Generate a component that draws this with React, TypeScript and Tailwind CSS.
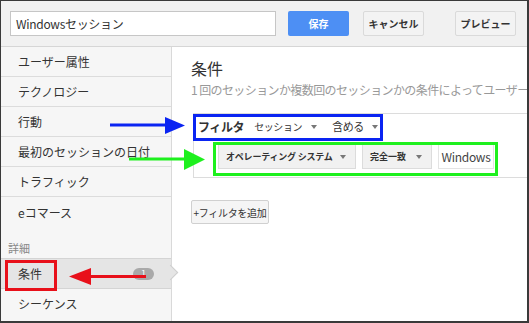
const font = { fontFamily: '"Noto Sans CJK JP", "Liberation Sans", sans-serif' };

function Caret({ className = "" }: { className?: string }) {
  return (
    <span
      className={`inline-block w-0 h-0 border-x-[3px] border-x-transparent border-t-[4px] border-t-[#777] ${className}`}
    ></span>
  );
}

const sideItems = ["ユーザー属性", "テクノロジー", "行動", "最初のセッションの日付", "トラフィック"];

export default function App() {
  return (
    <div
      className="relative w-[529px] h-[323px] overflow-hidden border-l border-t border-r-2 border-b-2 border-[#3a3a3a] bg-white flex flex-col text-[#333]"
      style={font}
    >
      {/* top bar */}
      <div className="h-[46px] shrink-0 bg-[#f1f1f1] border-b border-[#d6d6d6] flex items-center">
        <div className="ml-[9px] w-[266px] h-[25px] bg-white border border-[#c6c6c6] flex items-center px-[5px] text-[12px] tracking-[-0.3px]">
          Windowsセッション
        </div>
        <button className="ml-[12px] w-[61px] h-[25px] rounded-[2px] bg-[#4d8ff4] text-white text-[10px] font-bold">
          保存
        </button>
        <button className="ml-[14px] w-[61px] h-[25px] rounded-[2px] bg-[#f3f3f3] border border-[#dadada] text-[10px] font-bold text-[#333]">
          キャンセル
        </button>
        <button className="ml-[31px] w-[61px] h-[25px] rounded-[2px] bg-[#f3f3f3] border border-[#dadada] text-[10px] font-bold text-[#333]">
          プレビュー
        </button>
      </div>

      <div className="flex flex-1 min-h-0">
        {/* sidebar */}
        <div className="w-[171px] shrink-0 bg-[#f6f6f6] border-r border-[#d9d9d9] flex flex-col text-[12px]">
          {sideItems.map((t) => (
            <div key={t} className="h-[30px] shrink-0 border-b border-[#dcdcdc] flex items-center pl-[17px]">
              {t}
            </div>
          ))}
          <div className="h-[31px] shrink-0 flex items-center pl-[17px]">eコマース</div>
          <div className="h-[30px] shrink-0 flex items-end pb-[2px] pl-[7px] text-[11px] text-[#888]">詳細</div>
          <div className="relative h-[31px] shrink-0 bg-[#e5e5e5] border-y border-[#d4d4d4] flex items-center pl-[17px]">
            条件
            <span className="ml-auto mr-[17px] w-[21px] h-[12px] rounded-full bg-[#a9a9a9] text-white text-[9px] leading-[12px] text-center">
              1
            </span>
            <span className="absolute right-[-5px] top-[8px] w-[11px] h-[11px] rotate-45 bg-[#e5e5e5] border-t border-r border-[#cfcfcf]"></span>
          </div>
          <div className="h-[30px] shrink-0 flex items-center pl-[17px]">シーケンス</div>
        </div>

        {/* main */}
        <div className="flex-1 min-w-0 overflow-hidden pl-[19px] pt-[10px]">
          <div className="text-[16px] leading-[22px] text-[#333]">条件</div>
          <div className="mt-[3px] text-[12px] leading-[16px] text-[#999] whitespace-nowrap tracking-[-0.6px]">
            1 回のセッションか複数回のセッションかの条件によってユーザーや
          </div>
          <div className="mt-[15px] ml-[2px] w-[400px] h-[65px] border border-[#dcdcdc] flex flex-col">
            <div className="h-[25px] flex items-center pl-[4px] text-[10px] whitespace-nowrap tracking-[-0.4px]">
              <span className="font-bold text-[12px] tracking-[-0.4px]">フィルタ</span>
              <span className="ml-[10px]">セッション</span>
              <Caret className="ml-[9px]" />
              <span className="ml-[15px] text-[11px]">含める</span>
              <Caret className="ml-[8px]" />
            </div>
            <div className="mt-[5px] ml-[24px] flex items-center gap-[6px] h-[25px] text-[9px] whitespace-nowrap">
              <div className="h-[25px] w-[138px] bg-[#f1f1f1] border border-[#dcdcdc] flex items-center pl-[7px] font-bold tracking-[-0.2px]">
                オペレーティング システム
                <Caret className="ml-auto mr-[9px]" />
              </div>
              <div className="h-[25px] w-[70px] bg-[#f1f1f1] border border-[#dcdcdc] flex items-center pl-[7px] font-bold">
                完全一致
                <Caret className="ml-auto mr-[9px]" />
              </div>
              <div className="h-[25px] w-[56px] bg-white border border-[#e4e4e4] flex items-center justify-center text-[12px] text-[#444] tracking-[-0.3px]">
                Windows
              </div>
            </div>
          </div>
          <button className="mt-[22px] w-[78px] h-[24px] rounded-[2px] bg-[#f5f5f5] border border-[#d0d0d0] text-[10px] text-[#333] tracking-[-0.3px]">
            +フィルタを追加
          </button>
        </div>
      </div>

      {/* annotation boxes */}
      <div className="absolute left-[192px] top-[113px] w-[190px] h-[27px] border-[3px] border-[#0a24f2]"></div>
      <div className="absolute left-[212px] top-[141px] w-[285px] h-[34px] border-[3px] border-[#1ef01e]"></div>
      <div className="absolute left-[4px] top-[259px] w-[52px] h-[31px] border-[3px] border-[#e8101a]"></div>

      {/* annotation arrows */}
      <svg className="absolute left-0 top-0 pointer-events-none" width="529" height="323">
        <line x1="109" y1="124" x2="166" y2="124" stroke="#0a24f2" strokeWidth="3" />
        <polygon points="164,116 184,124.5 164,133" fill="#0a24f2" />
        <line x1="128" y1="158" x2="185" y2="158" stroke="#1ef01e" strokeWidth="3" />
        <polygon points="183,148 204,158.5 183,169" fill="#1ef01e" />
        <line x1="88" y1="275.5" x2="145" y2="275.5" stroke="#e8101a" strokeWidth="3" />
        <polygon points="90,267 68,275.5 90,284" fill="#e8101a" />
      </svg>
    </div>
  );
}
